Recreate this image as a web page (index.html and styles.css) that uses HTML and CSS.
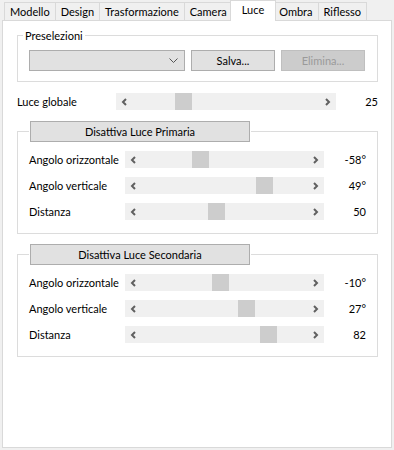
FILE: index.html
```html
<!DOCTYPE html>
<html lang="it">
  <head>
    <meta charset="UTF-8" />
    <title>Luce</title>
    <link rel="stylesheet" href="styles.css">
  </head>
  <body>
    <div class="tabs">
      <div class="tab">Modello</div>
      <div class="tab">Design</div>
      <div class="tab">Trasformazione</div>
      <div class="tab">Camera</div>
      <div class="tab active">Luce</div>
      <div class="tab">Ombra</div>
      <div class="tab">Riflesso</div>
    </div>

    <div class="panel">
      <fieldset class="group presets">
        <legend>Preselezioni</legend>
        <div class="preset-row">
          <div class="combo">
            <svg width="9" height="5" viewBox="0 0 9 5"><polyline points="0.5,0.5 4.5,4.5 8.5,0.5" fill="none" stroke="#555" stroke-width="1" /></svg>
          </div>
          <button class="btn">Salva...</button>
          <button class="btn" disabled>Elimina...</button>
        </div>
      </fieldset>

      <div class="row global">
        <span class="label">Luce globale</span>
        <div class="slider wide">
          <svg class="arrow" width="6" height="8" viewBox="0 0 6 8"><polyline points="5,1 2,4 5,7" fill="none" stroke="#606060" stroke-width="2" /></svg>
          <svg class="arrow" width="6" height="8" viewBox="0 0 6 8"><polyline points="1,1 4,4 1,7" fill="none" stroke="#606060" stroke-width="2" /></svg>
          <div class="thumb" style="left: 59px"></div>
        </div>
        <span class="value">25</span>
      </div>

      <!-- luce primaria -->
      <fieldset class="group light">
        <legend><button class="btn toggle">Disattiva Luce Primaria</button></legend>
        <div class="rows">
          <div class="row">
            <span class="label">Angolo orizzontale</span>
            <div class="slider">
              <svg class="arrow" width="6" height="8" viewBox="0 0 6 8"><polyline points="5,1 2,4 5,7" fill="none" stroke="#606060" stroke-width="2" /></svg>
              <svg class="arrow" width="6" height="8" viewBox="0 0 6 8"><polyline points="1,1 4,4 1,7" fill="none" stroke="#606060" stroke-width="2" /></svg>
              <div class="thumb" style="left: 67px"></div>
            </div>
            <span class="value">-58°</span>
          </div>
          <div class="row">
            <span class="label">Angolo verticale</span>
            <div class="slider">
              <svg class="arrow" width="6" height="8" viewBox="0 0 6 8"><polyline points="5,1 2,4 5,7" fill="none" stroke="#606060" stroke-width="2" /></svg>
              <svg class="arrow" width="6" height="8" viewBox="0 0 6 8"><polyline points="1,1 4,4 1,7" fill="none" stroke="#606060" stroke-width="2" /></svg>
              <div class="thumb" style="left: 131px"></div>
            </div>
            <span class="value">49°</span>
          </div>
          <div class="row">
            <span class="label">Distanza</span>
            <div class="slider">
              <svg class="arrow" width="6" height="8" viewBox="0 0 6 8"><polyline points="5,1 2,4 5,7" fill="none" stroke="#606060" stroke-width="2" /></svg>
              <svg class="arrow" width="6" height="8" viewBox="0 0 6 8"><polyline points="1,1 4,4 1,7" fill="none" stroke="#606060" stroke-width="2" /></svg>
              <div class="thumb" style="left: 83px"></div>
            </div>
            <span class="value">50</span>
          </div>
        </div>
      </fieldset>

      <!-- luce secondaria -->
      <fieldset class="group light">
        <legend><button class="btn toggle">Disattiva Luce Secondaria</button></legend>
        <div class="rows">
          <div class="row">
            <span class="label">Angolo orizzontale</span>
            <div class="slider">
              <svg class="arrow" width="6" height="8" viewBox="0 0 6 8"><polyline points="5,1 2,4 5,7" fill="none" stroke="#606060" stroke-width="2" /></svg>
              <svg class="arrow" width="6" height="8" viewBox="0 0 6 8"><polyline points="1,1 4,4 1,7" fill="none" stroke="#606060" stroke-width="2" /></svg>
              <div class="thumb" style="left: 87px"></div>
            </div>
            <span class="value">-10°</span>
          </div>
          <div class="row">
            <span class="label">Angolo verticale</span>
            <div class="slider">
              <svg class="arrow" width="6" height="8" viewBox="0 0 6 8"><polyline points="5,1 2,4 5,7" fill="none" stroke="#606060" stroke-width="2" /></svg>
              <svg class="arrow" width="6" height="8" viewBox="0 0 6 8"><polyline points="1,1 4,4 1,7" fill="none" stroke="#606060" stroke-width="2" /></svg>
              <div class="thumb" style="left: 113px"></div>
            </div>
            <span class="value">27°</span>
          </div>
          <div class="row">
            <span class="label">Distanza</span>
            <div class="slider">
              <svg class="arrow" width="6" height="8" viewBox="0 0 6 8"><polyline points="5,1 2,4 5,7" fill="none" stroke="#606060" stroke-width="2" /></svg>
              <svg class="arrow" width="6" height="8" viewBox="0 0 6 8"><polyline points="1,1 4,4 1,7" fill="none" stroke="#606060" stroke-width="2" /></svg>
              <div class="thumb" style="left: 135px"></div>
            </div>
            <span class="value">82</span>
          </div>
        </div>
      </fieldset>
    </div>
  </body>
</html>
```

FILE: styles.css
```css
body {
  margin: 0;
  background: #f0f0f0;
  font-family: Lato, 'Noto Sans', sans-serif;
  font-size: 11px;
  color: #000;
}

.tabs {
  display: flex;
  align-items: flex-end;
  height: 20px;
  padding-left: 4px;
}

.tab {
  box-sizing: border-box;
  height: 18px;
  line-height: 17px;
  padding: 0 5px;
  border: 1px solid #d9d9d9;
  border-bottom: none;
  margin-left: -1px;
  background: #f0f0f0;
  white-space: nowrap;
}

.tab:first-child {
  margin-left: 0;
}

/* la scheda attiva sporge di 2px e copre il bordo del pannello */
.tab.active {
  position: relative;
  z-index: 1;
  height: 21px;
  line-height: 17px;
  margin: 0 -2px -1px -3px;
  padding: 0 11px;
  background: #fff;
}

.panel {
  box-sizing: border-box;
  height: 428px;
  margin: 0 2px;
  padding: 7px 13px 0 14px;
  border: 1px solid #d9d9d9;
  background: #fff;
}

.group {
  margin: 0;
  border: 1px solid #dcdcdc;
  min-width: 0;
}

.group legend {
  line-height: 15px;
  padding: 0 2px;
}

.presets {
  padding: 7px 12px 10px 11px;
}

.presets legend {
  margin-left: -6px;
}

.preset-row {
  display: flex;
  gap: 6px;
}

.combo {
  box-sizing: border-box;
  width: 156px;
  height: 21px;
  background: #e1e1e1;
  border: 1px solid #adadad;
  display: flex;
  align-items: center;
  justify-content: flex-end;
  padding-right: 6px;
}

.btn {
  box-sizing: border-box;
  width: 84px;
  height: 21px;
  padding: 0;
  background: #e1e1e1;
  border: 1px solid #adadad;
  font-family: inherit;
  font-size: 11px;
  color: #000;
}

.btn:disabled {
  background: #cccccc;
  border-color: #bfbfbf;
  color: #9a9a9a;
}

.row {
  display: flex;
  align-items: center;
  height: 17px;
}

.label {
  width: 96px;
  flex-shrink: 0;
  white-space: nowrap;
}

.value {
  flex: 1;
  text-align: right;
}

.slider {
  position: relative;
  box-sizing: border-box;
  width: 199px;
  height: 17px;
  padding: 0 5px;
  background: #f0f0f0;
  display: flex;
  align-items: center;
  justify-content: space-between;
  flex-shrink: 0;
}

.thumb {
  position: absolute;
  top: 0;
  width: 17px;
  height: 17px;
  background: #cdcdcd;
}

.global {
  margin-top: 11px;
}

.global .label {
  width: 99px;
}

.slider.wide {
  width: 220px;
}

.light {
  margin-top: 11px;
  padding: 9px 11px 13px 11px;
}

.light + .light {
  margin-top: 10px;
}

.light legend {
  padding: 0 1px;
}

.toggle {
  width: 220px;
}

.rows {
  display: flex;
  flex-direction: column;
  gap: 9px;
}
```
